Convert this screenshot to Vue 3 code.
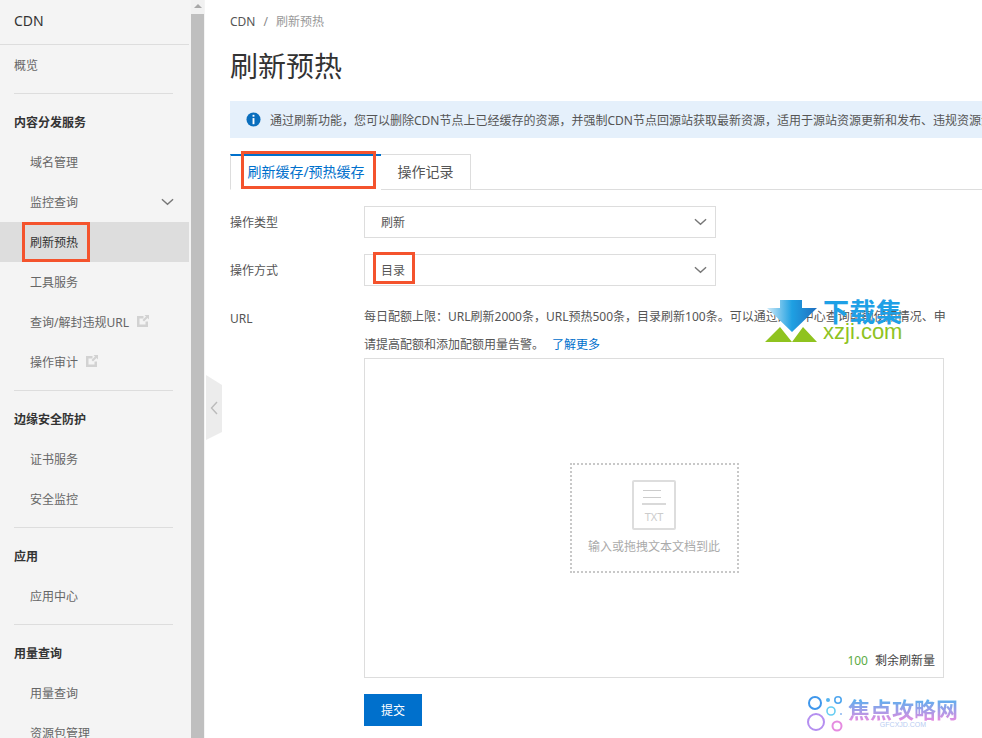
<template>
  <div class="page">
    <aside class="side">
      <div class="side-inner">
        <div class="side-title">CDN</div>
        <div class="side-group first">
          <a class="nav-item top">概览</a>
        </div>
        <div class="side-group" v-for="g in groups" :key="g.title">
          <div class="group-title">{{ g.title }}</div>
          <a v-for="it in g.items" :key="it.name" class="nav-item" :class="{ active: it.active }">
            <span>{{ it.name }}</span>
            <svg v-if="it.ext" class="ext" viewBox="0 0 12 12" width="12" height="12">
              <path d="M0 1h6.500v2.500H2.500v6h6V6.500H11V12H0z M7.500 0H12v4.500L10.500 3 7 6.500 5.500 5 9 1.500z" fill="#d2d2d2" />
            </svg>
            <svg v-if="it.arrow" class="arrow" viewBox="0 0 14 8" width="13" height="8">
              <path d="M1 1l6 5.500L13 1" fill="none" stroke="#777" stroke-width="1.500" />
            </svg>
            <i v-if="it.active" class="mark mark-nav"></i>
          </a>
        </div>
      </div>
      <div class="scrollbar">
        <div class="scroll-up"></div>
        <div class="scroll-thumb"></div>
      </div>
    </aside>
    <div class="collapse">
      <svg viewBox="0 0 8 14" width="8" height="14">
        <path d="M7 1L1.500 7 7 13" fill="none" stroke="#bbb" stroke-width="1.400" />
      </svg>
    </div>

    <main class="main">
      <div class="crumb">CDN<em>/</em><span>刷新预热</span></div>
      <h1>刷新预热</h1>
      <div class="notice">
        <svg viewBox="0 0 16 16" width="15" height="15">
          <circle cx="8" cy="8" r="7.500" fill="#0a6ebd" />
          <rect x="7" y="3" width="2" height="2" fill="#fff" />
          <rect x="7" y="6.500" width="2" height="6.500" fill="#fff" />
        </svg>
        <span>通过刷新功能，您可以删除CDN节点上已经缓存的资源，并强制CDN节点回源站获取最新资源，适用于源站资源更新和发布、违规资源清理、域名配置修改等场景。</span>
      </div>

      <div class="tabs">
        <div class="tab on">刷新缓存/预热缓存<i class="mark mark-tab"></i></div>
        <div class="tab">操作记录</div>
      </div>

      <div class="form-row">
        <label>操作类型</label>
        <div class="select">
          <span>刷新</span>
          <svg viewBox="0 0 14 8" width="13" height="8"><path d="M1 1l6 5.500L13 1" fill="none" stroke="#777" stroke-width="1.500" /></svg>
        </div>
      </div>
      <div class="form-row">
        <label>操作方式</label>
        <div class="select">
          <span>目录</span>
          <svg viewBox="0 0 14 8" width="13" height="8"><path d="M1 1l6 5.500L13 1" fill="none" stroke="#777" stroke-width="1.500" /></svg>
          <i class="mark mark-sel"></i>
        </div>
      </div>
      <div class="url-row">
        <label>URL</label>
        <div class="url-body">
          <p>每日配额上限：URL刷新2000条，URL预热500条，目录刷新100条。可以通过配额中心查询配额使用情况、申请提高配额和添加配额用量告警。<a>了解更多</a></p>
          <div class="textbox">
            <div class="drop">
              <svg viewBox="0 0 44 50" width="44" height="50">
                <rect x="1" y="1" width="42" height="48" rx="1" fill="none" stroke="#ddd" stroke-width="2" />
                <path d="M11 10.500h18M11 17.500h18" stroke="#ccc" />
                <path d="M10 24h24" stroke="#ccc" stroke-width="1.500" />
                <text x="22" y="41" text-anchor="middle" class="txt">TXT</text>
              </svg>
              <span>输入或拖拽文本文档到此</span>
            </div>
            <div class="counter"><b>100</b>剩余刷新量</div>
          </div>
          <button class="submit">提交</button>
        </div>
      </div>
    </main>

    <div class="wm-xz">
      <svg viewBox="0 0 54 44" width="54" height="44">
        <defs>
          <linearGradient id="wmBlue" x1="0" x2="1" y1="0" y2="0">
            <stop offset="0" stop-color="#cfeaf8" />
            <stop offset="0.5" stop-color="#1fa0e2" />
            <stop offset="1" stop-color="#1f6fc0" />
          </linearGradient>
        </defs>
        <path d="M0 42l15-15 12 15zM27 42h25l-14-15z" fill="#8fc31f" />
        <path d="M15 0h22v8h15L27 32 2 8h13z" fill="url(#wmBlue)" />
      </svg>
      <div class="wm-text">
        <strong>下载集</strong>
        <span>xzji.com</span>
      </div>
    </div>

    <div class="wm-jd">
      <svg viewBox="0 0 40 40" width="40" height="40">
        <circle cx="9" cy="9" r="6" fill="none" stroke="#3f97ec" stroke-width="2" />
        <circle cx="22" cy="6" r="2" fill="#56b4f0" />
        <circle cx="32" cy="6" r="3.200" fill="none" stroke="#4fa6ee" stroke-width="1.600" />
        <circle cx="25" cy="17" r="4" fill="none" stroke="#66cdf2" stroke-width="1.600" />
        <circle cx="35" cy="20" r="1" fill="#8ab6f0" />
        <circle cx="10" cy="28" r="8" fill="none" stroke="#b58ff0" stroke-width="2" />
        <circle cx="31" cy="32" r="4.500" fill="none" stroke="#e58be0" stroke-width="2" />
      </svg>
      <div class="wm-jd-text">
        <strong>焦点攻略网</strong>
        <span>GFCXJD.COM</span>
      </div>
    </div>
  </div>
</template>

<script setup>
const groups = [
  {
    title: '内容分发服务',
    items: [
      { name: '域名管理' },
      { name: '监控查询', arrow: true },
      { name: '刷新预热', active: true },
      { name: '工具服务' },
      { name: '查询/解封违规URL', ext: true },
      { name: '操作审计', ext: true },
    ],
  },
  { title: '边缘安全防护', items: [{ name: '证书服务' }, { name: '安全监控' }] },
  { title: '应用', items: [{ name: '应用中心' }] },
  { title: '用量查询', items: [{ name: '用量查询' }, { name: '资源包管理' }] },
]
</script>

<style>
html, body { overflow: hidden; background: #fff; }
</style>

<style scoped>
.page {
  position: relative;
  display: flex;
  height: 738px;
  width: 982px;
  overflow: hidden;
  background: #fff;
  font-family: "Noto Sans", "Noto Sans CJK SC", sans-serif;
  font-size: 12px;
  color: #555;
}
.side { display: flex; width: 205px; flex: none; background: #f4f4f4; }
.side-inner { width: 189px; flex: none; overflow: hidden; }
.side-title {
  height: 44px;
  line-height: 42px;
  padding-left: 14px;
  font-size: 14px;
  color: #333;
  border-bottom: 1px solid #ddd;
}
.side-group { margin: 0 16px 0 14px; border-bottom: 1px solid #ddd; padding-bottom: 8px; position: relative; }
.side-group.first { height: 40px; }
.group-title { height: 40px; padding-top: 8px; line-height: 42px; font-weight: 700; color: #333; }
.nav-item {
  position: relative;
  display: flex;
  align-items: center;
  height: 40px;
  margin: 0 -16px 0 -14px;
  padding-left: 30px;
  color: #666;
}
.nav-item.top { padding-left: 14px; }
.nav-item.active { background: #ddd; color: #333; }
.ext { margin-left: 8px; margin-top: -3px; }
.arrow { position: absolute; left: 161px; top: 16px; }
.scrollbar { width: 13px; margin-left: 2px; flex: none; background: #f1f1f1; }
.scroll-up { height: 14px; position: relative; }
.scroll-up::after {
  content: "";
  position: absolute;
  left: 3px;
  top: 4px;
  border: 4px solid transparent;
  border-top: 0;
  border-bottom: 4px solid #a8a8a8;
}
.scroll-thumb { height: 724px; background: #bfbfbf; }
.collapse {
  position: absolute;
  left: 206px;
  top: 375px;
  width: 16px;
  height: 65px;
  display: flex;
  align-items: center;
  justify-content: center;
  background: #ececec;
  clip-path: polygon(0 0, 100% 10px, 100% 57px, 0 100%);
}
.main { flex: 1; min-width: 0; padding: 13px 0 0 25px; overflow: hidden; }
.crumb { line-height: 18px; color: #555; }
.crumb em { font-style: normal; margin: 0 8px; color: #888; }
.crumb span { color: #999; }
h1 {
  margin: 15px 0 0;
  font-size: 28px;
  line-height: 40px;
  font-weight: 400;
  color: #333;
}
.notice {
  display: flex;
  align-items: center;
  gap: 9px;
  height: 37px;
  margin-top: 15px;
  padding-left: 16px;
  background: #e5f0fb;
  white-space: nowrap;
  overflow: hidden;
}
.notice svg { flex: none; }
.tabs {
  position: relative;
  display: flex;
  height: 36px;
  box-sizing: border-box;
  margin-top: 16px;
  border-bottom: 1px solid #ddd;
}
.tab {
  position: relative;
  width: 90px;
  height: 36px;
  box-sizing: border-box;
  line-height: 34px;
  text-align: center;
  font-size: 14px;
  border: 1px solid #ddd;
  border-left: 0;
  background: #fff;
  color: #555;
}
.tab.on {
  width: 151px;
  border-top: 2px solid #0070cc;
  border-left: 1px solid #ddd;
  border-bottom-color: #fff;
  border-right: 0;
  color: #0070cc;
  line-height: 32px;
}
.form-row { display: flex; align-items: center; height: 32px; margin-top: 16px; }
label { width: 134px; flex: none; }
.select {
  position: relative;
  display: flex;
  align-items: center;
  justify-content: space-between;
  width: 352px;
  height: 32px;
  box-sizing: border-box;
  padding: 0 8px 0 16px;
  border: 1px solid #ddd;
  color: #555;
}
.url-row { display: flex; margin-top: 16px; }
.url-row label { line-height: 28px; padding-top: 3px; }
.url-body { width: 580px; flex: none; }
.url-body p { margin: 0 0 -1px; padding-top: 1px; line-height: 28px; width: 585px; color: #555; }
.url-body a { color: #0070cc; margin-left: 8px; }
.textbox {
  display: grid;
  width: 580px;
  height: 320px;
  box-sizing: border-box;
  border: 1px solid #ddd;
}
.drop {
  grid-area: 1 / 1;
  place-self: center;
  width: 169px;
  height: 110px;
  box-sizing: border-box;
  border: 2px dotted #c8c8c8;
  display: flex;
  flex-direction: column;
  align-items: center;
  padding-top: 15px;
  color: #aaa;
}
.drop span { margin-top: 8px; line-height: 18px; white-space: nowrap; }
.txt { font-family: "Noto Sans", sans-serif; font-size: 11px; fill: #ccc; }
.counter {
  grid-area: 1 / 1;
  place-self: end;
  padding: 0 8px 7px 0;
  line-height: 18px;
  color: #444;
}
.counter b { font-weight: 400; color: #5bab45; margin-right: 7px; }
.submit {
  display: block;
  width: 58px;
  height: 32px;
  margin-top: 16px;
  padding: 0;
  border: 0;
  background: #0070cc;
  color: #fff;
  font: inherit;
}
.mark { position: absolute; border: 3px solid #f4532d; box-sizing: border-box; pointer-events: none; }
.mark-nav { left: 22px; top: 0; width: 68px; height: 40px; }
.mark-tab { left: 10px; top: -5px; width: 135px; height: 38px; }
.mark-sel { left: 8px; top: -3px; width: 42px; height: 32px; }
.wm-xz { position: absolute; left: 765px; top: 300px; display: flex; gap: 4px; }
.wm-text { display: flex; flex-direction: column; }
.wm-text strong { font-size: 26px; line-height: 24px; color: #1ea0e6; letter-spacing: 0.5px; }
.wm-text span { font-family: "Liberation Sans", sans-serif; font-size: 22px; line-height: 20px; margin-top: -2px; color: #8fc31f; }
.wm-jd { position: absolute; left: 806px; top: 694px; display: flex; gap: 2px; }
.wm-jd-text { padding-top: 3px; }
.wm-jd strong {
  display: block;
  font-size: 22px;
  line-height: 24px;
  background: linear-gradient(#4ab4f0, #e58be0);
  -webkit-background-clip: text;
  background-clip: text;
  color: transparent;
}
.wm-jd span {
  display: block;
  text-align: center;
  font-family: "Liberation Sans", sans-serif;
  font-size: 7px;
  line-height: 8px;
  color: #b9cdf2;
}
</style>
